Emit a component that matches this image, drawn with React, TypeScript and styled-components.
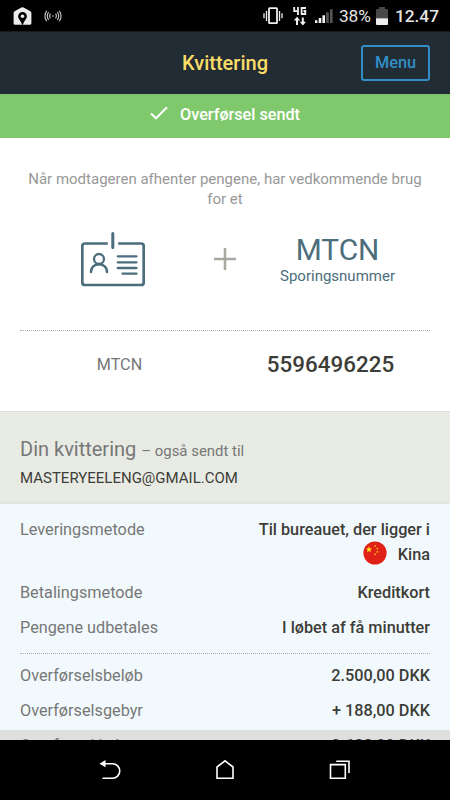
import React from "react";
import styled, { createGlobalStyle } from "styled-components";

const GlobalStyle = createGlobalStyle`
  * { box-sizing: border-box; }
  body { margin: 0; background: #000; font-family: Roboto, sans-serif; }
`;

const Screen = styled.div`
  width: 450px;
  height: 800px;
  display: flex;
  flex-direction: column;
  overflow: hidden;
  background: #fff;
`;

const StatusBar = styled.div`
  flex: none;
  height: 31px;
  background: #000;
  color: #e4e4e4;
  display: flex;
  align-items: center;
  padding: 1px 11px 0 13px;
`;
const StatusIcon = styled.svg<{ $gap?: number }>`
  display: block;
  flex: none;
  margin-right: ${(p) => p.$gap ?? 0}px;
`;
const Spacer = styled.div`
  flex: 1;
`;
const Battery = styled.span`
  font-size: 17.3px;
  line-height: 30px;
  width: 37px;
`;
const Clock = styled.span`
  font-size: 17.3px;
  font-weight: 500;
  line-height: 30px;
`;

const Header = styled.header`
  flex: none;
  height: 63px;
  padding: 0 20px;
  background: #222c34;
  border-top: 1px solid #171c21;
  display: grid;
  grid-template-columns: 69px 1fr 69px;
  align-items: center;
`;
const Title = styled.h1`
  grid-column: 2;
  margin: 0;
  text-align: center;
  font-size: 20px;
  line-height: 24px;
  font-weight: 500;
  color: #fbdd68;
`;
const MenuButton = styled.button`
  height: 36px;
  padding: 0 0 1px;
  border: 2px solid #318fc6;
  border-radius: 3px;
  background: transparent;
  color: #318fc6;
  font: 500 16.25px/31px Roboto, sans-serif;
`;

const Banner = styled.div`
  flex: none;
  height: 44px;
  padding-bottom: 3px;
  display: flex;
  align-items: center;
  justify-content: center;
  gap: 12px;
  background: #7fc86c;
  color: #fff;
  font-size: 16.2px;
  line-height: 20px;
  font-weight: 500;
`;
const CheckIcon = styled.svg`
  display: block;
  margin-bottom: 3px;
`;

const Pickup = styled.section`
  flex: none;
  height: 273px;
  padding: 31px 20px 0;
  background: #fff;
`;
const Intro = styled.p`
  margin: 0;
  text-align: center;
  font-size: 15px;
  line-height: 20px;
  color: #989898;
`;
const Requirements = styled.div`
  height: 122px;
  padding-top: 20px;
  display: grid;
  grid-template-columns: 185px 40px 185px;
  justify-items: center;
  align-items: start;
  border-bottom: 1px dotted #aaa;
`;
const PlusIcon = styled.svg`
  display: block;
  margin-top: 19px;
`;
const CardIcon = styled.svg`
  display: block;
  margin-top: 3px;
`;
const Tracking = styled.div`
  text-align: center;
  color: #4c6d7c;
  padding-top: 6px;
`;
const TrackingName = styled.div`
  font-size: 29.8px;
  line-height: 30px;
`;
const TrackingHint = styled.div`
  font-size: 15px;
  line-height: 22px;
`;
const NumberRow = styled.div`
  height: 67px;
  padding: 0 6px 0 7px;
  display: grid;
  grid-template-columns: 185px 1fr;
  align-items: center;
  text-align: center;
`;
const NumberLabel = styled.span`
  font-size: 16.2px;
  color: #777;
`;
const NumberValue = styled.span`
  font-size: 22.4px;
  font-weight: 500;
  color: #3d3d38;
  padding: 0 0 2px 25px;
`;

const ReceiptHead = styled.section`
  flex: none;
  height: 93px;
  padding: 24px 20px 0;
  background: #e8ebe4;
  border-top: 1px solid #dde0da;
  border-bottom: 2px solid #e2e5de;
`;
const ReceiptTitle = styled.h2`
  margin: 0;
  font-size: 20px;
  line-height: 26px;
  font-weight: 400;
  color: #777;
`;
const SentTo = styled.small`
  font-size: 14.95px;
`;
const Email = styled.div`
  font-size: 15px;
  line-height: 28px;
  color: #3d3d38;
`;

const Details = styled.section`
  flex: none;
  height: 226px;
  padding: 13px 20px 0;
  background: #f2f9fd;
`;
const DetailRow = styled.div<{ $height?: number }>`
  height: ${(p) => p.$height ?? 35}px;
  display: flex;
  justify-content: space-between;
  align-items: flex-start;
  font-size: 16.25px;
  line-height: 25px;
`;
const Label = styled.span`
  color: #777;
`;
const Value = styled.span`
  text-align: right;
  font-weight: 500;
  color: #3d3d38;
`;
const Country = styled.span`
  display: flex;
  justify-content: flex-end;
  gap: 11px;
`;
const Flag = styled.svg`
  display: block;
  margin-top: -1px;
`;
const Divider = styled.div`
  height: 1px;
  margin-bottom: 9px;
  border-top: 1px dotted #aab0b3;
`;
const TotalPeek = styled.section`
  flex: none;
  height: 10px;
  padding: 3px 20px 0;
  overflow: hidden;
  background: #dfdfdf;
`;

const NavBar = styled.nav`
  flex: none;
  height: 60px;
  background: #000;
  display: flex;
  align-items: center;
  justify-content: center;
  gap: 92px;
`;
const NavIcon = styled.svg`
  display: block;
  fill: none;
  stroke: #fff;
  stroke-width: 1.6;
`;

const star = (cx: number, cy: number, r: number, turn = 0) =>
  Array.from({ length: 10 }, (_, i) => {
    const a = ((i * 36 - 90 + turn) * Math.PI) / 180;
    const d = i % 2 ? r * 0.4 : r;
    return `${(cx + d * Math.cos(a)).toFixed(2)},${(cy + d * Math.sin(a)).toFixed(2)}`;
  }).join(" ");

export default function App() {
  return (
    <Screen>
      <GlobalStyle />
      <StatusBar>
        <StatusIcon $gap={12} width="19" height="18" viewBox="0 0 19 18">
          <path d="M9.5 0.2 Q10 0.2 10.6.6 L17.4 4.3 Q18.4 5 18.4 6V16.2Q18.4 17.8 16.8 17.8H2.2Q.6 17.8.6 16.2V6Q.6 5 1.6 4.3L8.4.6Q9 .2 9.5.2Z" fill="#ececec" />
          <path d="M9.5 5A4.4 4.4 0 0 0 5.1 9.4C5.1 11.8 8 13.4 9 17.8h1C11 13.4 13.9 11.8 13.9 9.4A4.4 4.4 0 0 0 9.5 5Z" fill="#000" />
          <circle cx="9.5" cy="9.2" r="1.8" fill="#ececec" />
        </StatusIcon>
        <StatusIcon width="18" height="12" viewBox="0 0 18 12" fill="none" stroke="#c8c8c8" strokeWidth="1.1">
          <circle cx="9" cy="6" r=".8" fill="#c8c8c8" stroke="none" />
          <path d="M6.4 3.6Q4.9 6 6.4 8.4M4.6 2Q2 6 4.6 10M2.7.7Q-.9 6 2.7 11.3M11.6 3.6Q13.1 6 11.6 8.4M13.4 2Q16 6 13.4 10M15.3.7Q18.9 6 15.3 11.3" />
        </StatusIcon>
        <Spacer />
        <StatusIcon $gap={10} width="20" height="18" viewBox="0 0 20 18" fill="none" stroke="#eee">
          <rect x="6" y="1.2" width="8" height="15" strokeWidth="1.8" rx=".6" />
          <path d="M3.5 4v10M16.5 4v10M1 6.3v5M19 6.3v5" strokeWidth="1.3" />
        </StatusIcon>
        <StatusIcon $gap={8} width="14" height="19" viewBox="0 0 14 19" fill="none" stroke="#f0f0f0">
          <path d="M1.2 0v4.2H5M5 0v8M13 1H8.6v6H12.3V4H10.5" strokeWidth="1.8" />
          <path d="M4 18v-6M9.8 10.5v6" strokeWidth="2" />
          <path d="M.8 13.4 4 9.8l3.2 3.6ZM6.8 14.8l3.1 3.6 3.1-3.6Z" fill="#f0f0f0" stroke="none" />
        </StatusIcon>
        <StatusIcon $gap={6} width="18" height="14" viewBox="0 0 18 14">
          <path d="M0 11.3h2.4V14H0ZM3.7 9h2.6v5H3.7ZM7.4 6.3H10V14H7.4Z" fill="#f0f0f0" />
          <path d="M11.2 3.3h2.6V14h-2.6ZM15 .2h2.6V14H15Z" fill="#555" />
        </StatusIcon>
        <Battery>38%</Battery>
        <StatusIcon $gap={7} width="12" height="18" viewBox="0 0 12 18">
          <path d="M3 0h6v2h2q1 0 1 1v8H0V3q0-1 1-1h2Z" fill="#484848" />
          <path d="M0 11.3h12V17q0 1-1 1H1q-1 0-1-1Z" fill="#eee" />
        </StatusIcon>
        <Clock>12.47</Clock>
      </StatusBar>

      <Header>
        <Title>Kvittering</Title>
        <MenuButton>Menu</MenuButton>
      </Header>

      <Banner>
        <CheckIcon width="18" height="14" viewBox="0 0 18 14" fill="none" stroke="#fff" strokeWidth="2">
          <path d="M1 7.5 6 12.3 17 1.3" />
        </CheckIcon>
        Overførsel sendt
      </Banner>

      <Pickup>
        <Intro>Når modtageren afhenter pengene, har vedkommende brug for et</Intro>
        <Requirements>
          <CardIcon width="64" height="55" viewBox="0 0 64 55" fill="none" stroke="#4c6d7c" strokeLinecap="round">
            <path d="M26.8 11.5H4Q1.3 11.5 1.3 14V50.3Q1.3 53 4 53H60Q62.7 53 62.7 50.3V14Q62.7 11.5 60 11.5H37.2" strokeWidth="2.7" strokeLinecap="butt" />
            <path d="M31.8 1.5v14" strokeWidth="3" />
            <circle cx="18" cy="27" r="5" strokeWidth="2.3" />
            <path d="M10 40C10 29.6 26 29.6 26 40" strokeWidth="2.5" />
            <path d="M36.8 24.3H55.5M36.8 30.3H55.5M36.8 36H55.5M41.5 41.7H55.5" strokeWidth="2.3" />
          </CardIcon>
          <PlusIcon width="22" height="22" viewBox="0 0 22 22">
            <path d="M11 0v22M0 11h22" stroke="#a8a99f" strokeWidth="2.6" />
          </PlusIcon>
          <Tracking>
            <TrackingName>MTCN</TrackingName>
            <TrackingHint>Sporingsnummer</TrackingHint>
          </Tracking>
        </Requirements>
        <NumberRow>
          <NumberLabel>MTCN</NumberLabel>
          <NumberValue>5596496225</NumberValue>
        </NumberRow>
      </Pickup>

      <ReceiptHead>
        <ReceiptTitle>
          Din kvittering <SentTo>– også sendt til</SentTo>
        </ReceiptTitle>
        <Email>MASTERYEELENG@GMAIL.COM</Email>
      </ReceiptHead>

      <Details>
        <DetailRow $height={63}>
          <Label>Leveringsmetode</Label>
          <Value>
            Til bureauet, der ligger i
            <Country>
              <Flag width="24" height="24" viewBox="0 0 24 24">
                <circle cx="12" cy="12" r="11.6" fill="#df2117" />
                <g fill="#ffe51c">
                  <polygon points={star(6, 8.6, 3.4)} />
                  <polygon points={star(12, 5, 1.3, 20)} />
                  <polygon points={star(14.3, 7.6, 1.3, 10)} />
                  <polygon points={star(14.3, 10.9, 1.3)} />
                  <polygon points={star(12, 13.3, 1.3, 20)} />
                </g>
              </Flag>
              Kina
            </Country>
          </Value>
        </DetailRow>
        <DetailRow>
          <Label>Betalingsmetode</Label>
          <Value>Kreditkort</Value>
        </DetailRow>
        <DetailRow $height={38}>
          <Label>Pengene udbetales</Label>
          <Value>I løbet af få minutter</Value>
        </DetailRow>
        <Divider />
        <DetailRow>
          <Label>Overførselsbeløb</Label>
          <Value>2.500,00 DKK</Value>
        </DetailRow>
        <DetailRow>
          <Label>Overførselsgebyr</Label>
          <Value>+ 188,00 DKK</Value>
        </DetailRow>
      </Details>
      <TotalPeek>
        <DetailRow>
          <Label>Overførsel i alt</Label>
          <Value>2.688,00 DKK</Value>
        </DetailRow>
      </TotalPeek>

      <NavBar>
        <NavIcon width="24" height="22" viewBox="0 0 24 22">
          <path d="M3 4.7H14.5A7 7 0 0 1 14.5 19.2H4.5" />
          <path d="M7.5 1v7.2L1.5 4.7Z" fill="#fff" stroke="none" />
        </NavIcon>
        <NavIcon width="22" height="22" viewBox="0 0 22 22">
          <path d="M3 19.2V8L11 1.8 19 8V19.2Z" />
        </NavIcon>
        <NavIcon width="24" height="22" viewBox="0 0 24 22">
          <path d="M2.5 5.6H17.3V19.2H2.5ZM8.3 2.3H21V14" />
        </NavIcon>
      </NavBar>
    </Screen>
  );
}
